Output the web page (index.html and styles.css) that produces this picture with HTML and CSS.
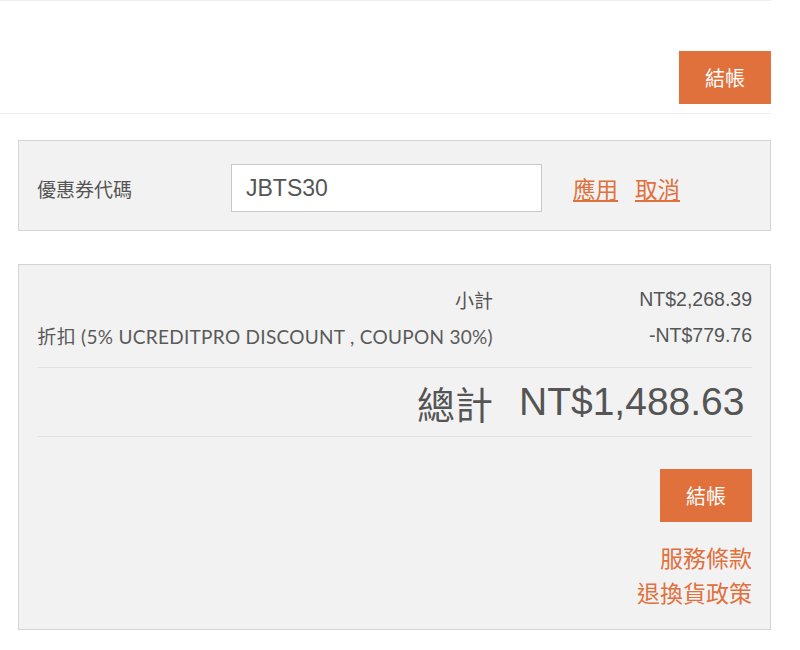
FILE: index.html
```html
<!DOCTYPE html>
<html lang="zh-Hant">

<head>
    <meta charset="UTF-8">
    <meta name="viewport" content="width=device-width, initial-scale=1.0">
    <title>購物車</title>
    <link rel="stylesheet" href="styles.css">
</head>

<body>
    <!-- 頂部結帳 -->
    <div class="top-bar">
        <button type="button" class="btn-checkout">結帳</button>
    </div>

    <!-- 優惠券 -->
    <div class="coupon-box">
        <label for="coupon-code" class="coupon-label">優惠券代碼</label>
        <input type="text" id="coupon-code" class="coupon-input" value="JBTS30">
        <a href="#" class="link">應用</a>
        <a href="#" class="link">取消</a>
    </div>

    <!-- 金額合計 -->
    <div class="totals-box">
        <div class="row">
            <span class="row-label">小計</span>
            <span class="row-value">NT$2,268.39</span>
        </div>
        <div class="row">
            <span class="row-label discount">折扣 (5% UCREDITPRO DISCOUNT , COUPON 30%)</span>
            <span class="row-value">-NT$779.76</span>
        </div>
        <div class="row grand">
            <span class="row-label">總計</span>
            <span class="row-value">NT$1,488.63</span>
        </div>
        <div class="actions">
            <button type="button" class="btn-checkout">結帳</button>
            <a href="#" class="policy">服務條款</a>
            <a href="#" class="policy">退換貨政策</a>
        </div>
    </div>
</body>

</html>
```

FILE: styles.css
```css
/* 通用樣式 */
body {
    margin: 0;
    background-color: #fff;
    color: #555;
    font-family: "Liberation Sans", "Noto Sans CJK TC", sans-serif;
}

.top-bar {
    width: 771px;
    height: 114px;
    box-sizing: border-box;
    border-top: 1px solid #eee;
    border-bottom: 1px solid #eee;
    display: flex;
    justify-content: flex-end;
    align-items: flex-start;
    padding-top: 50px;
}

.btn-checkout {
    width: 92px;
    height: 53px;
    padding: 0;
    background-color: #e0703c;
    color: #fff;
    border: none;
    font-family: "Noto Sans CJK TC", sans-serif;
    font-size: 20px;
    cursor: pointer;
}

/* 優惠券 */
.coupon-box {
    width: 753px;
    height: 91px;
    box-sizing: border-box;
    margin: 26px 0 0 18px;
    padding: 5px 18px 0;
    background-color: #f2f2f2;
    border: 1px solid #d4d4d4;
    display: flex;
    align-items: center;
}

.coupon-label {
    width: 194px;
    font-family: "Noto Sans CJK TC", sans-serif;
    font-size: 19px;
    color: #555;
}

.coupon-input {
    width: 311px;
    height: 48px;
    box-sizing: border-box;
    padding: 0 14px;
    margin-right: 31px;
    border: 1px solid #c8c8c8;
    background-color: #fff;
    color: #555;
    font-family: "Liberation Sans", sans-serif;
    font-size: 23px;
}

.link {
    margin-right: 17px;
    color: #e0703c;
    font-family: "Noto Sans CJK TC", sans-serif;
    font-size: 22.5px;
}

/* 合計 */
.totals-box {
    width: 753px;
    height: 366px;
    box-sizing: border-box;
    margin: 33px 0 0 18px;
    padding: 16px 18px 0;
    background-color: #f2f2f2;
    border: 1px solid #d4d4d4;
}

.row {
    display: flex;
    align-items: center;
    height: 36px;
    font-size: 19.5px;
}

.row-label {
    width: 456px;
    text-align: right;
    font-family: "Noto Sans CJK TC", sans-serif;
    font-size: 19px;
}

.row-label.discount {
    font-family: Lato, "Noto Sans CJK TC", sans-serif;
    font-size: 19px;
    letter-spacing: 0.3px;
    color: #5a5a5a;
}

.row-value {
    flex: 1;
    text-align: right;
}

.grand {
    height: 68px;
    margin-top: 14px;
    border-top: 1px solid #e2e2e2;
    border-bottom: 1px solid #e2e2e2;
}

.grand .row-label,
.grand .row-value {
    font-size: 38px;
}

.grand .row-value {
    flex: none;
    margin-left: 26px;
    text-align: left;
    font-size: 39px;
}

.actions {
    display: flex;
    flex-direction: column;
    align-items: flex-end;
    padding-top: 32px;
}

.actions .btn-checkout {
    margin-bottom: 18px;
}

.policy {
    color: #e0703c;
    text-decoration: none;
    font-family: "Noto Sans CJK TC", sans-serif;
    font-size: 23px;
    line-height: 35px;
}
```
